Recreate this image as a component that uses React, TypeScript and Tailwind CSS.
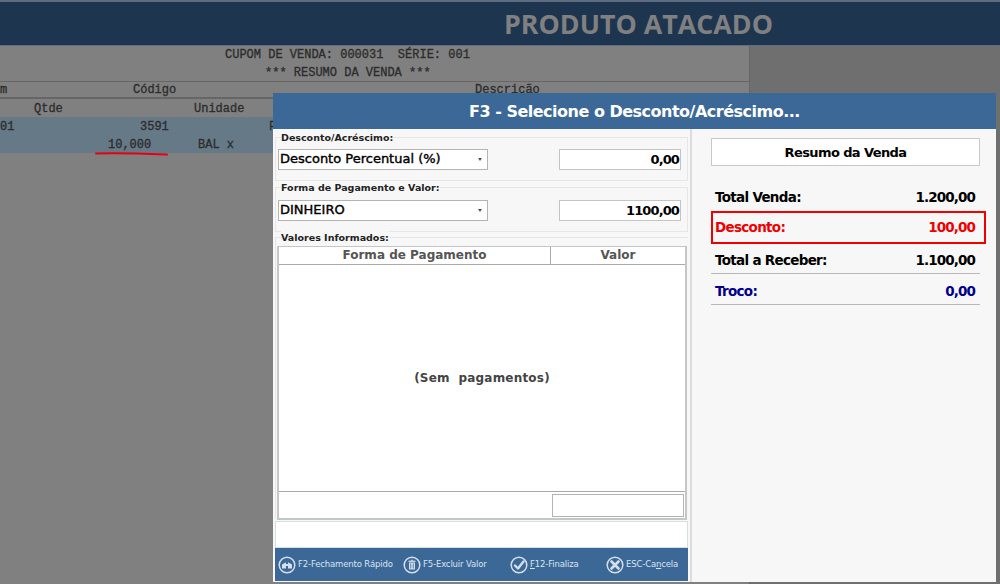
const sans = "font-['DejaVu_Sans',sans-serif]"

function CircleIcon({ children }: { children: React.ReactNode }) {
  return (
    <svg width="18" height="18" viewBox="0 0 18 18" fill="none" className="shrink-0">
      <circle cx="9" cy="9" r="7.8" stroke="#d5e0ec" strokeWidth="1.5" />
      {children}
    </svg>
  )
}

function FooterAction({ width, icon, label }: { width: string; icon: React.ReactNode; label: React.ReactNode }) {
  return (
    <div className={`flex items-center gap-[2px] ${width}`}>
      <CircleIcon>{icon}</CircleIcon>
      <span className="whitespace-nowrap text-[8.5px] tracking-[-0.15px] text-[#dbe4ef]">{label}</span>
    </div>
  )
}

function Group({ title, className, children }: { title: string; className: string; children: React.ReactNode }) {
  return (
    <div className={`border border-[#e6e6e6] ${className}`}>
      <div className="-mt-[7px] ml-[5px] h-[13px] w-fit bg-[#f7f7f7] text-[9.5px] leading-[13px] font-bold text-[#222]">{title}</div>
      {children}
    </div>
  )
}

function Select({ value }: { value: string }) {
  return (
    <div className="flex h-[21px] w-[210px] items-center justify-between border border-[#b4b4b4] bg-white pr-[5px] pb-[2px] pl-[1px] text-[13px] text-black">
      <span className="[-webkit-text-stroke:0.4px_black]">{value}</span>
      <span className="mt-[2px] h-0 w-0 border-x-[2px] border-t-[3px] border-x-transparent border-t-[#555]" />
    </div>
  )
}

function AmountInput({ value }: { value: string }) {
  return (
    <div className="flex h-[21px] w-[122px] items-center justify-end border border-[#c4c4c4] bg-white pr-[1px] text-[13px] font-bold tracking-[-0.9px] text-black">
      {value}
    </div>
  )
}

function SummaryRow({ label, value, className }: { label: string; value: string; className: string }) {
  return (
    <div className={`flex items-center justify-between text-[13.5px] font-bold tracking-[-0.7px] ${className}`}>
      <span>{label}</span>
      <span className="tracking-[-0.9px]">{value}</span>
    </div>
  )
}

function ReceiptBackdrop() {
  return (
    <div className="flex h-[584px] flex-col overflow-hidden bg-[#6f6f6f]">
      <div className="h-[46px] shrink-0 border-t-2 border-b border-[#5d6c80] bg-[#1e3550] pl-[504px]">
        <div className="font-['Open_Sans',sans-serif] text-[26.8px] leading-[44px] font-bold whitespace-nowrap text-[#808080]">PRODUTO ATACADO</div>
      </div>
      <div className="relative w-[750px] flex-1 border-r border-[#666] bg-[#808080] font-['Liberation_Mono',monospace] text-[12px] text-[#2c2c2c] [-webkit-text-stroke:0.3px_#2c2c2c]">
        <div className="flex h-[17px] items-center pl-[225px] whitespace-pre">CUPOM DE VENDA: 000031  SÉRIE: 001</div>
        <div className="flex h-[18px] items-center pt-[2px] pl-[265px] whitespace-pre">*** RESUMO DA VENDA ***</div>
        <div className="flex h-[18px] items-center border-t border-b-2 border-[#666] pt-[1px]">
          <span className="w-[133px]">m</span>
          <span className="w-[342px]">Código</span>
          <span>Descrição</span>
        </div>
        <div className="flex h-[18px] items-center pt-[2px]">
          <span className="w-[194px] pl-[34px]">Qtde</span>
          <span>Unidade</span>
        </div>
        <div className="h-[36px] bg-[#667987]">
          <div className="flex h-[18px] items-center pt-[2px]">
            <span className="w-[140px]">01</span>
            <span className="w-[129px]">3591</span>
            <span>F</span>
          </div>
          <div className="flex h-[18px] items-center pt-[2px]">
            <span className="w-[198px] pl-[108px]">10,000</span>
            <span>BAL x</span>
          </div>
        </div>
        {/* hand-drawn mark under the quantity */}
        <svg width="76" height="6" viewBox="0 0 76 6" fill="none" className="absolute top-[105px] left-[94px]">
          <path d="M2 2.5 C 22 1.6, 44 2.4, 73 3.6" stroke="#e60012" strokeWidth="2" strokeLinecap="round" />
        </svg>
      </div>
    </div>
  )
}

export default function App() {
  return (
    <div className={`relative h-[584px] w-[1000px] overflow-hidden ${sans}`}>
      <ReceiptBackdrop />

      <div className="absolute top-[93px] left-[273px] flex h-[489px] w-[723px] flex-col bg-[#f7f7f7]">
        <div className="flex h-[36px] shrink-0 items-center justify-center bg-[#3c6898] pt-[2px] text-[16px] font-bold tracking-[-0.5px] text-white">
          F3 - Selecione o Desconto/Acréscimo...
        </div>

        <div className="flex min-h-0 flex-1">
          <div className="flex w-[417px] shrink-0 flex-col pt-[8px] pl-[2px]">
            <Group title="Desconto/Acréscimo:" className="h-[44px] w-[413px]">
              <div className="mt-[5px] flex justify-between pr-[6px] pl-[2px]">
                <Select value="Desconto Percentual (%)" />
                <AmountInput value="0,00" />
              </div>
            </Group>
            <Group title="Forma de Pagamento e Valor:" className="mt-[6px] h-[45px] w-[413px]">
              <div className="mt-[6px] flex justify-between pr-[6px] pl-[2px]">
                <Select value="DINHEIRO" />
                <AmountInput value="1100,00" />
              </div>
            </Group>
            <Group title="Valores Informados:" className="mt-[5px] h-[282px] w-[413px] border-r-0 border-b-0">
              <div className="mt-[2px] ml-[1px] flex h-[274px] w-[410px] flex-col border-2 border-t border-[#c6c6c6] bg-white">
                <div className="flex h-[18px] shrink-0 border-b border-[#aaa] text-[12px] leading-[17px] font-bold text-[#555]">
                  <div className="w-[272px] border-r border-[#aaa] text-center">Forma de Pagamento</div>
                  <div className="flex-1 text-center">Valor</div>
                </div>
                <div className="flex flex-1 items-center justify-center text-[12px] font-bold tracking-[0.2px] whitespace-pre text-[#444]">
                  (Sem  pagamentos)
                </div>
                <div className="flex h-[27px] shrink-0 items-center justify-end border-t border-[#aaa] pr-[1px]">
                  <div className="h-[23px] w-[132px] border border-[#b4b4b4]" />
                </div>
              </div>
            </Group>

            <div className="mt-[2px] h-[27px] w-[413px] shrink-0 border border-[#cfe3d8] bg-white" />

            <div className="flex h-[33px] w-[413px] shrink-0 items-center bg-[#3c6898] pl-[3px]">
              <FooterAction
                width="w-[125px]"
                label="F2-Fechamento Rápido"
                icon={
                  <g fill="#d5e0ec">
                    <path d="M4 8.4 L8 6.2 V12.6 H4 Z" />
                    <path d="M10 6.2 L14 8.4 V12.6 H10 Z" />
                    <rect x="7.5" y="8" width="3" height="2" />
                  </g>
                }
              />
              <FooterAction
                width="w-[107px]"
                label="F5-Excluir Valor"
                icon={
                  <g fill="#d5e0ec">
                    <rect x="7.8" y="3.8" width="2.4" height="0.9" />
                    <rect x="5.5" y="4.7" width="7" height="1.2" />
                    <path d="M6 6.6 H12 V13.4 H6 Z M7.4 7.6 V12.4 H8.2 V7.6 Z M9.8 7.6 V12.4 H10.6 V7.6 Z" fillRule="evenodd" />
                  </g>
                }
              />
              <FooterAction
                width="w-[96px]"
                label={<><span className="underline">F</span>12-Finaliza</>}
                icon={<path d="M5 9.5 L8 12.5 L13.5 5.5" stroke="#d5e0ec" strokeWidth="2.4" strokeLinecap="round" strokeLinejoin="round" />}
              />
              <FooterAction
                width="w-[80px]"
                label={<>ESC-Ca<span className="underline">n</span>cela</>}
                icon={<path d="M5.5 5.5 L12.5 12.5 M12.5 5.5 L5.5 12.5" stroke="#d5e0ec" strokeWidth="2.6" strokeLinecap="round" />}
              />
            </div>
          </div>

          <div className="flex flex-1 flex-col border-l-2 border-[#dcdcdc] pt-[9px] pl-[19px]">
            <div className="flex h-[28px] w-[269px] shrink-0 items-center justify-center border border-[#c8c8c8] bg-white pt-[2px] text-[13px] font-bold tracking-[-0.6px] text-black">
              Resumo da Venda
            </div>
            <SummaryRow label="Total Venda:" value="1.200,00" className="mt-[15px] h-[30px] w-[269px] pt-[3px] pr-[5px] pl-[4px] text-black" />
            <div className="flex h-[33px] w-[275px] items-center border-2 border-[#f00000]">
              <SummaryRow label="Desconto:" value="100,00" className="w-[271px] pr-[9px] pl-[2px] text-[#f00000]" />
            </div>
            <SummaryRow label="Total a Receber:" value="1.100,00" className="h-[30px] w-[269px] border-b border-[#b8b8b8] pt-[3px] pr-[5px] pl-[4px] text-black" />
            <SummaryRow label="Troco:" value="0,00" className="h-[31px] w-[269px] border-b border-[#b8b8b8] pt-[4px] pr-[5px] pl-[4px] text-[#00008b]" />
          </div>
        </div>
      </div>
    </div>
  )
}
